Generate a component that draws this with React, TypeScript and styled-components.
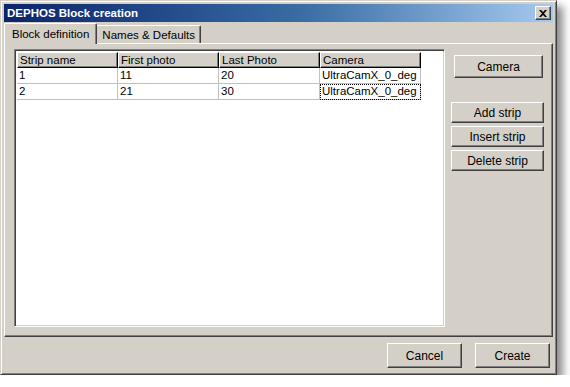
import React from "react";
import styled, { createGlobalStyle } from "styled-components";

const Global = createGlobalStyle`
  body {
    margin: 0;
    background: #ffffff;
    font-family: "Liberation Sans", Arial, sans-serif;
    font-size: 11px;
    color: #000;
  }
`;

const face = "#d4d0c8";

const Window = styled.div`
  width: 557px;
  height: 375px;
  box-sizing: border-box;
  background: ${face};
  border-top: 1px solid ${face};
  border-left: 1px solid ${face};
  border-right: 1px solid #404040;
  border-bottom: 1px solid #404040;
  box-shadow: inset 1px 1px 0 #ffffff, inset -1px -1px 0 #808080,
    6px 6px 8px rgba(0, 0, 0, 0.45);
  padding: 3px;
  display: flex;
  flex-direction: column;
`;

const TitleBar = styled.div`
  height: 18px;
  display: flex;
  align-items: center;
  justify-content: space-between;
  padding: 0 2px;
  background: linear-gradient(to right, #0a246a 0%, #3a6ea5 55%, #a6caf0 100%);
  color: #fff;
  font-family: "Liberation Sans", Arial, sans-serif;
  font-weight: bold;
  font-size: 11.5px;
`;

const CloseBtn = styled.div`
  width: 16px;
  height: 14px;
  box-sizing: border-box;
  background: ${face};
  border-top: 1px solid #fff;
  border-left: 1px solid #fff;
  border-right: 1px solid #404040;
  border-bottom: 1px solid #404040;
  box-shadow: inset -1px -1px 0 #808080;
  display: flex;
  align-items: center;
  justify-content: center;
`;

const Body = styled.div`
  flex: 1;
  display: flex;
  flex-direction: column;
  padding: 1px 0 0 0;
`;

const TabRow = styled.div`
  display: flex;
  align-items: flex-end;
  height: 20px;
`;

const Tab = styled.div<{ active?: boolean }>`
  box-sizing: border-box;
  height: ${(p) => (p.active ? "21px" : "18px")};
  padding: 0 ${(p) => (p.active ? "7px" : "5px")};
  margin-left: ${(p) => (p.active ? "0" : "-1px")};
  border-top: 1px solid #fff;
  border-left: 1px solid #fff;
  border-right: 1px solid #404040;
  box-shadow: inset -1px 0 0 #808080;
  border-radius: 2px 2px 0 0;
  background: ${face};
  display: flex;
  align-items: center;
  font-size: 11.5px;
  position: relative;
  z-index: ${(p) => (p.active ? 2 : 1)};
  margin-bottom: ${(p) => (p.active ? "-1px" : "0")};
`;

const Panel = styled.div`
  box-sizing: border-box;
  height: 294px;
  border-top: 1px solid #fff;
  border-left: 1px solid #fff;
  border-right: 1px solid #404040;
  border-bottom: 1px solid #404040;
  box-shadow: inset -1px -1px 0 #808080;
  display: flex;
  padding: 5px 8px 9px 9px;
  gap: 6px;
`;

const Grid = styled.div`
  width: 433px;
  box-sizing: border-box;
  background: #fff;
  border-top: 1px solid #808080;
  border-left: 1px solid #808080;
  border-right: 1px solid #fff;
  border-bottom: 1px solid #fff;
  box-shadow: inset 1px 1px 0 #404040, inset -1px -1px 0 ${face};
  padding: 2px;
`;

const Row = styled.div`
  display: flex;
  height: 16px;
`;

const HeadCell = styled.div`
  width: 101px;
  box-sizing: border-box;
  height: 16px;
  background: ${face};
  border-top: 1px solid #fff;
  border-left: 1px solid #fff;
  border-right: 1px solid #000;
  border-bottom: 1px solid #000;
  box-shadow: inset -1px -1px 0 #808080;
  padding-left: 2px;
  font-size: 11.5px;
  line-height: 14px;
  white-space: nowrap;
  overflow: hidden;
`;

const Cell = styled.div<{ focused?: boolean }>`
  width: 101px;
  box-sizing: border-box;
  height: 16px;
  border-right: 1px solid #c0c0c0;
  border-bottom: 1px solid #c0c0c0;
  padding-left: 2px;
  font-size: 11.5px;
  line-height: 15px;
  white-space: nowrap;
  outline: ${(p) => (p.focused ? "1px dotted #000" : "none")};
  outline-offset: -1px;
`;

const Side = styled.div`
  display: flex;
  flex-direction: column;
  padding-top: 6px;
`;

const Button = styled.button<{ w?: number; h?: number }>`
  width: ${(p) => p.w ?? 93}px;
  height: ${(p) => p.h ?? 21}px;
  box-sizing: border-box;
  background: ${face};
  border: none;
  border-top: 1px solid #fff;
  border-left: 1px solid #fff;
  border-right: 1px solid #404040;
  border-bottom: 1px solid #404040;
  box-shadow: inset -1px -1px 0 #808080;
  font-family: "Liberation Sans", Arial, sans-serif;
  font-size: 12px;
  color: #000;
  padding: 0;
  margin-bottom: 3px;
`;

const Footer = styled.div`
  display: flex;
  justify-content: flex-end;
  gap: 13px;
  padding: 6px 3px 0 0;
`;

const cols = ["Strip name", "First photo", "Last Photo", "Camera"];
const rows = [
  ["1", "11", "20", "UltraCamX_0_deg"],
  ["2", "21", "30", "UltraCamX_0_deg"],
];

export default function App() {
  return (
    <>
      <Global />
      <Window>
        <TitleBar>
          <span style={{ paddingLeft: 1 }}>DEPHOS Block creation</span>
          <CloseBtn>
            <svg width="8" height="7" viewBox="0 0 8 7">
              <path d="M0 0h2l2 2 2-2h2L5 3.5 8 7H6L4 5 2 7H0l3-3.5z" fill="#000" />
            </svg>
          </CloseBtn>
        </TitleBar>
        <Body>
          <TabRow>
            <Tab active>Block definition</Tab>
            <Tab>Names &amp; Defaults</Tab>
          </TabRow>
          <Panel>
            <Grid>
              <Row>
                {cols.map((c) => (
                  <HeadCell key={c}>{c}</HeadCell>
                ))}
              </Row>
              {rows.map((r, i) => (
                <Row key={i}>
                  {r.map((v, j) => (
                    <Cell key={j} focused={i === 1 && j === 3}>
                      {v}
                    </Cell>
                  ))}
                </Row>
              ))}
            </Grid>
            <Side>
              <Button w={89} h={23} style={{ marginLeft: 3, marginBottom: 24 }}>
                Camera
              </Button>
              <Button>Add strip</Button>
              <Button>Insert strip</Button>
              <Button>Delete strip</Button>
            </Side>
          </Panel>
          <Footer>
            <Button w={75} h={25}>Cancel</Button>
            <Button w={75} h={25}>Create</Button>
          </Footer>
        </Body>
      </Window>
    </>
  );
}
